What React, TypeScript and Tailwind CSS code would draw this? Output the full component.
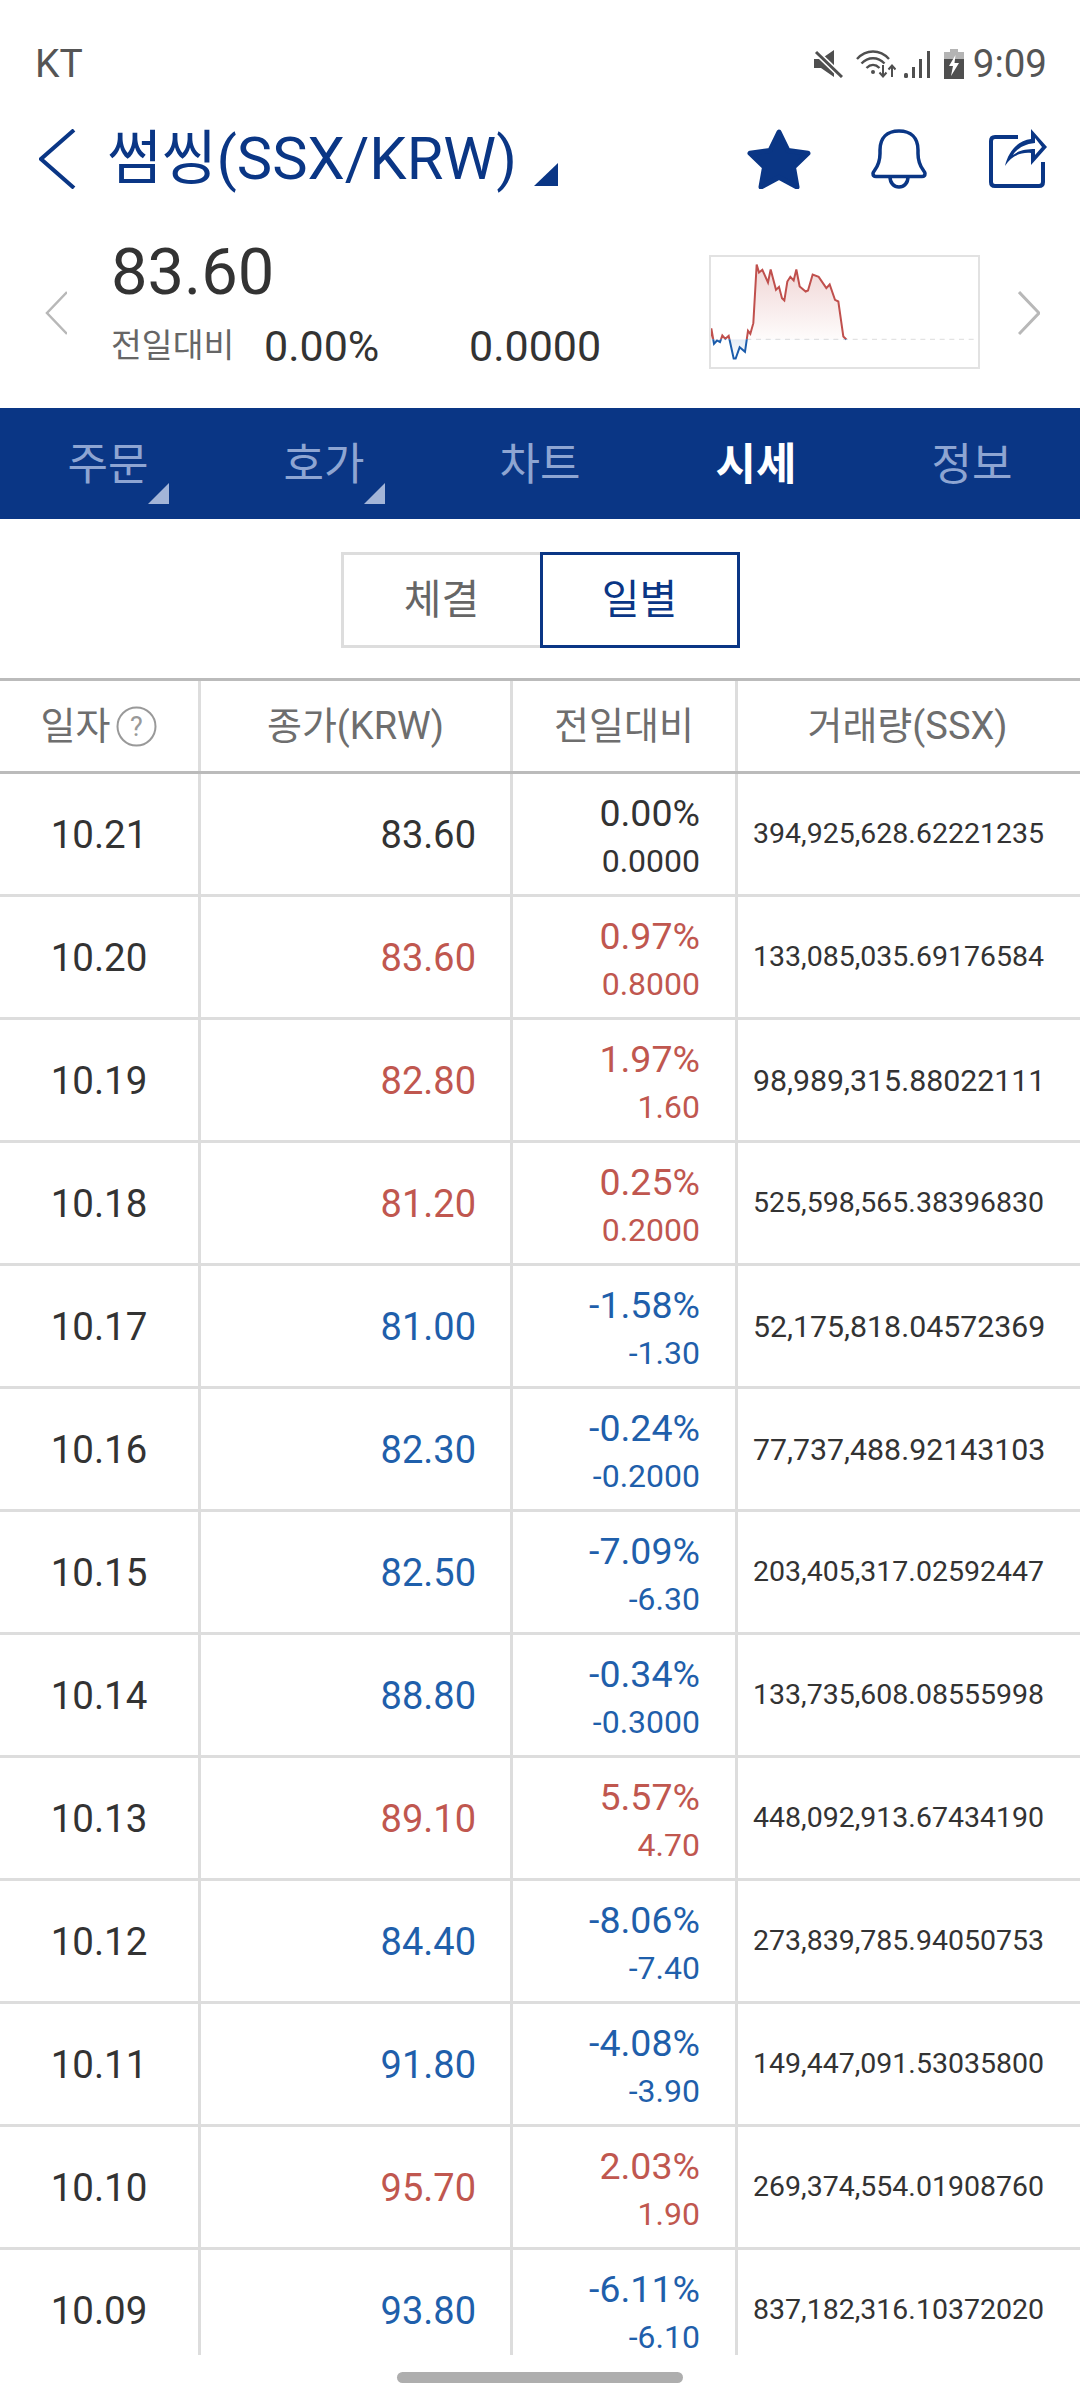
import React from "react";

const FONT = { fontFamily: 'Roboto, "Noto Sans CJK KR", sans-serif' };

type Row = { d: string; p: string; a: string; b: string; v: string; c: "k" | "r" | "b" };
const rows: Row[] = [
  { d: "10.21", p: "83.60", a: "0.00%", b: "0.0000", v: "394,925,628.62221235", c: "k" },
  { d: "10.20", p: "83.60", a: "0.97%", b: "0.8000", v: "133,085,035.69176584", c: "r" },
  { d: "10.19", p: "82.80", a: "1.97%", b: "1.60", v: "98,989,315.88022111", c: "r" },
  { d: "10.18", p: "81.20", a: "0.25%", b: "0.2000", v: "525,598,565.38396830", c: "r" },
  { d: "10.17", p: "81.00", a: "-1.58%", b: "-1.30", v: "52,175,818.04572369", c: "b" },
  { d: "10.16", p: "82.30", a: "-0.24%", b: "-0.2000", v: "77,737,488.92143103", c: "b" },
  { d: "10.15", p: "82.50", a: "-7.09%", b: "-6.30", v: "203,405,317.02592447", c: "b" },
  { d: "10.14", p: "88.80", a: "-0.34%", b: "-0.3000", v: "133,735,608.08555998", c: "b" },
  { d: "10.13", p: "89.10", a: "5.57%", b: "4.70", v: "448,092,913.67434190", c: "r" },
  { d: "10.12", p: "84.40", a: "-8.06%", b: "-7.40", v: "273,839,785.94050753", c: "b" },
  { d: "10.11", p: "91.80", a: "-4.08%", b: "-3.90", v: "149,447,091.53035800", c: "b" },
  { d: "10.10", p: "95.70", a: "2.03%", b: "1.90", v: "269,374,554.01908760", c: "r" },
  { d: "10.09", p: "93.80", a: "-6.11%", b: "-6.10", v: "837,182,316.10372020", c: "b" },
];

const colorClass = { k: "text-[#333333]", r: "text-[#c0574f]", b: "text-[#1f5fab]" };

const PTS =
  "90,340 95,296 103,342 112,332 121,337 128,317 137,327 147,318 153,345 162,386 168,386 180,352 196,366 205,303 212,312 221,280 231,104 238,128 248,120 265,158 273,119 289,180 298,171 307,205 314,212 323,155 332,141 342,152 350,119 360,170 378,185 385,182 399,134 417,141 440,175 450,164 466,210 476,215 491,320 500,329";

function Chart() {
  return (
    <svg width="270" height="113" viewBox="88 76 810 338" className="block">
      <defs>
        <linearGradient id="redg" x1="0" y1="104" x2="0" y2="328" gradientUnits="userSpaceOnUse">
          <stop offset="0" stopColor="#c0504d" stopOpacity="0.24" />
          <stop offset="1" stopColor="#c0504d" stopOpacity="0.02" />
        </linearGradient>
        <linearGradient id="blug" x1="0" y1="328" x2="0" y2="386" gradientUnits="userSpaceOnUse">
          <stop offset="0" stopColor="#1b5cab" stopOpacity="0.12" />
          <stop offset="1" stopColor="#1b5cab" stopOpacity="0" />
        </linearGradient>
        <clipPath id="up"><rect x="88" y="76" width="810" height="252" /></clipPath>
        <clipPath id="dn"><rect x="88" y="328" width="810" height="86" /></clipPath>
      </defs>
      <line x1="200" y1="328.5" x2="885" y2="328.5" stroke="#e3e3e3" strokeWidth="4" strokeDasharray="15 14" />
      <polygon points={`90,328 ${PTS} 500,328`} fill="url(#redg)" clipPath="url(#up)" />
      <polygon points={`90,328 ${PTS} 500,328`} fill="url(#blug)" clipPath="url(#dn)" />
      <polyline points={PTS} fill="none" stroke="#c0504d" strokeWidth="6" clipPath="url(#up)" />
      <polyline points={PTS} fill="none" stroke="#1b5cab" strokeWidth="6" clipPath="url(#dn)" />
    </svg>
  );
}

function StatusIcons() {
  return (
    <div className="flex items-center">
      <svg width="29" height="28" viewBox="0 0 29 28" className="block">
        <path d="M0 9h7L20 0v27L7 18H0z" fill="#4f4f4f" />
        <line x1="2" y1="2" x2="28" y2="27" stroke="#ffffff" strokeWidth="6" />
        <line x1="2" y1="2" x2="28" y2="27" stroke="#4f4f4f" strokeWidth="3" />
      </svg>
      <svg width="40" height="28" viewBox="0 0 40 28" className="block ml-[13px]" fill="none" stroke="#4f4f4f" strokeWidth="2.4">
        <path d="M1 9C10 -1 24 -1 33 9" />
        <path d="M5.5 13.5C12 6.5 22 6.5 28.5 13.5" />
        <path d="M10.5 18C14.5 14 19.5 14 23.5 18" />
        <circle cx="17" cy="22" r="2" fill="#4f4f4f" stroke="none" />
        <path d="M27 15v11M23.5 22.5l3.5 4 3.5-4" strokeWidth="2" />
        <path d="M36 27V16M32.5 19.5l3.5-4 3.5 4" strokeWidth="2" />
      </svg>
      <svg width="27" height="28" viewBox="0 0 27 28" className="block ml-[8px]" fill="#4f4f4f">
        <rect x="0" y="23" width="4" height="5" rx="1.5" />
        <rect x="8" y="17" width="3" height="11" />
        <rect x="15" y="9" width="3" height="19" />
        <rect x="23" y="1" width="3" height="27" />
      </svg>
      <svg width="20" height="30" viewBox="0 0 20 30" className="block ml-[13px]">
        <rect x="6" y="0" width="8" height="4" fill="#b4b4b4" />
        <rect x="0" y="3" width="20" height="7" fill="#b4b4b4" />
        <rect x="0" y="10" width="20" height="20" fill="#4f4f4f" />
        <path d="M11.5 6L5 17h4l-2 10 8-13h-4.5z" fill="#ffffff" />
      </svg>
      <span className="ml-[9px] text-[38.5px] leading-[40px] text-[#555555]">9:09</span>
    </div>
  );
}

function Tab({ t, on, tri }: { t: string; on?: boolean; tri?: boolean }) {
  return (
    <div className="relative flex-1 flex items-center justify-center pt-[3px]">
      <span className={on ? "text-[44px] font-bold text-white" : "text-[44px] text-[#8ea5d2]"}>{t}</span>
      {tri && (
        <svg width="21" height="21" viewBox="0 0 21 21" className="absolute left-[148px] top-[75px]">
          <polygon points="21,0 21,21 0,21" fill="#a3b5d8" />
        </svg>
      )}
    </div>
  );
}

export default function App() {
  return (
    <div className="w-[1080px] h-[2400px] bg-white overflow-hidden flex flex-col" style={FONT}>
      {/* status bar */}
      <div className="h-[124px] pt-[44px] pl-[35px] pr-[33px] flex items-start justify-between">
        <span className="text-[39px] leading-[40px] text-[#555555]">KT</span>
        <StatusIcons />
      </div>

      {/* title */}
      <div className="h-[70px] pl-[39px] pr-[31px] flex items-center">
        <svg width="37" height="60" viewBox="0 0 37 60" className="block shrink-0">
          <polyline points="35,1 2,30 35,59" fill="none" stroke="#0a3685" strokeWidth="4" />
        </svg>
        <span className="ml-[31px] text-[59.500px] leading-[72px] text-[#0a3685] whitespace-nowrap">썸씽(SSX/KRW)</span>
        <svg width="24" height="23" viewBox="0 0 24 23" className="block ml-[17px] mt-[30px] shrink-0">
          <polygon points="24,0 24,23 0,23" fill="#0a3685" />
        </svg>
        <div className="ml-auto flex items-center">
          <svg width="64" height="60" viewBox="0 0 64 60" className="block">
            <path
              d="M32 3l9 18.500 20 2.800-14.500 14 3.500 19.700-18-9.800-18 9.800 3.500-19.700L3 24.300l20-2.800z"
              fill="#0a3685"
              stroke="#0a3685"
              strokeWidth="5"
              strokeLinejoin="round"
            />
          </svg>
          <svg width="56" height="60" viewBox="0 0 56 60" className="block ml-[60px]" fill="none" stroke="#0a3685" strokeWidth="3.500">
            <path d="M2 44.500c0-3 7-6 7-20V21C9 9 16 2 28 2s19 7 19 19v3.500c0 14 7 17 7 20 0 2-1 3-3 3H5c-2 0-3-1-3-3z" />
            <path d="M19 48c0 6 4 10 9 10s9-4 9-10" />
          </svg>
          <svg width="60" height="60" viewBox="0 0 60 60" className="block ml-[62px]">
            <path d="M29 8H6c-2.500 0-4 1.500-4 4v41c0 2.500 1.500 4 4 4h44c2.500 0 4-1.500 4-4V33" fill="none" stroke="#0a3685" strokeWidth="4" />
            <path
              fillRule="evenodd"
              d="M42 0L58 18 42 36V24C32 23 22 27 16 37 19 23 29 11 42 10zM46 9v5C34 15 27 21 24 26 30 21 38 20 46 20v6L53 18z"
              fill="#0a3685"
            />
          </svg>
        </div>
      </div>

      {/* quote */}
      <div className="h-[214px] relative flex">
        <svg width="22" height="44" viewBox="0 0 22 44" className="absolute left-[45px] top-[97px]">
          <polyline points="22,1 2,22 22,43" fill="none" stroke="#b8b8b8" strokeWidth="2.500" />
        </svg>
        <div className="ml-[111px] pt-[43px]">
          <div className="text-[65px] leading-[70px] text-[#333333]">83.60</div>
          <div className="mt-[14px] flex items-center h-[50px]">
            <span className="w-[153px] text-[33.500px] text-[#666666]">전일대비</span>
            <span className="w-[205px] text-[43px] text-[#333333]">0.00%</span>
            <span className="text-[43px] text-[#333333]">0.0000</span>
          </div>
        </div>
        <div className="absolute left-[709px] top-[61px] w-[271px] h-[114px] border-2 border-[#e2e2e2] overflow-hidden">
          <div className="-m-[2px]"><Chart /></div>
        </div>
        <svg width="22" height="44" viewBox="0 0 22 44" className="absolute left-[1018px] top-[97px]">
          <polyline points="1,1 21,22 1,43" fill="none" stroke="#b8b8b8" strokeWidth="3" />
        </svg>
      </div>

      {/* tabs */}
      <div className="h-[111px] bg-[#0a3685] flex">
        <Tab t="주문" tri />
        <Tab t="호가" tri />
        <Tab t="차트" />
        <Tab t="시세" on />
        <Tab t="정보" />
      </div>

      {/* toggle */}
      <div className="h-[159px] pt-[33px] flex justify-center">
        <div className="flex h-[96px] w-[399px]">
          <div className="w-[199px] border-[3px] border-r-0 border-[#dddddd] flex items-center justify-center pt-[2px] text-[41px] text-[#666666]">체결</div>
          <div className="w-[200px] border-[3px] border-[#0a3685] flex items-center justify-center pt-[2px] text-[41px] text-[#0a3685]">일별</div>
        </div>
      </div>

      {/* table */}
      <div className="h-[1677px] overflow-hidden border-t-[3px] border-[#bbbbbb] tabular-nums">
        <div className="grid grid-cols-[201px_312px_225px_345px] w-[1083px] h-[93px] border-b-[3px] border-[#bbbbbb] text-[38px] text-[#6e6e6e]">
          <div className="border-r-[3px] border-[#dddddd] flex items-center justify-center">
            <span>일자</span>
            <svg width="41" height="41" viewBox="0 0 41 41" className="ml-[6px]">
              <circle cx="20.500" cy="20.500" r="19" fill="none" stroke="#999999" strokeWidth="2" />
              <text x="20.500" y="30" textAnchor="middle" fontSize="27" fill="#999999">?</text>
            </svg>
          </div>
          <div className="border-r-[3px] border-[#dddddd] flex items-center justify-center">종가(KRW)</div>
          <div className="border-r-[3px] border-[#dddddd] flex items-center justify-center">전일대비</div>
          <div className="flex items-center justify-center pr-[6px]">거래량(SSX)</div>
        </div>
        {rows.map((r) => (
          <div key={r.d} className="grid grid-cols-[201px_312px_225px_345px] w-[1083px] h-[123px] border-b-[3px] border-[#dddddd]">
            <div className="border-r-[3px] border-[#dddddd] flex items-center justify-center pt-[2px] text-[38.500px] text-[#333333]">{r.d}</div>
            <div className={`border-r-[3px] border-[#dddddd] flex items-center justify-end pr-[34px] pt-[2px] text-[38px] ${colorClass[r.c]}`}>{r.p}</div>
            <div className={`border-r-[3px] border-[#dddddd] flex flex-col items-end justify-center pr-[35px] pt-[5px] ${colorClass[r.c]}`}>
              <span className="text-[37.500px] leading-[46px]">{r.a}</span>
              <span className="text-[32px] leading-[44px] mt-[3px]">{r.b}</span>
            </div>
            <div className={`flex items-center pl-[15px] pt-[1px] text-[#333333] whitespace-nowrap ${r.v.length < 20 ? "text-[30.300px]" : "text-[28.500px]"}`}>{r.v}</div>
          </div>
        ))}
      </div>

      {/* home bar */}
      <div className="flex-1 flex justify-center pt-[17px]">
        <div className="w-[286px] h-[11px] rounded-full bg-[#aeaeae]" />
      </div>
    </div>
  );
}
